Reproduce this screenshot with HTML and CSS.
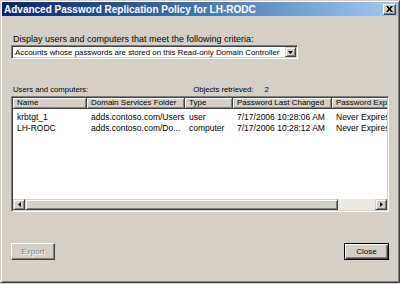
FILE: index.html
```html
<!DOCTYPE html>
<html>
<head>
<meta charset="utf-8">
<link rel="stylesheet" href="styles.css">
</head>
<body>
<div class="window">
  <div class="titlebar">
    <span class="title">Advanced Password Replication Policy for LH-RODC</span>
    <span class="xbtn"><svg width="7" height="6" viewBox="0 0 7 6"><path d="M0 0h2l1.5 2L5 0h2L4.5 3 7 6H5L3.5 4 2 6H0l2.5-3z" fill="#000"/></svg></span>
  </div>
  <div class="body">
    <div class="label criteria">Display users and computers that meet the following criteria:</div>
    <div class="select">
      <span class="select-text">Accounts whose passwords are stored on this Read-only Domain Controller</span>
      <span class="select-btn"><svg width="5" height="3" viewBox="0 0 5 3"><path d="M0 0h5L2.5 3z" fill="#000"/></svg></span>
    </div>
    <div class="listhead">
      <span class="label">Users and computers:</span>
      <span class="label count">Objects retrieved:<span class="num">2</span></span>
    </div>
    <div class="list">
      <div class="grid">
        <div class="hcell">Name</div>
        <div class="hcell">Domain Services Folder</div>
        <div class="hcell">Type</div>
        <div class="hcell">Password Last Changed</div>
        <div class="hcell">Password Expires</div>
        <div class="cell">krbtgt_1</div>
        <div class="cell">adds.contoso.com/Users</div>
        <div class="cell">user</div>
        <div class="cell">7/17/2006 10:28:06 AM</div>
        <div class="cell">Never Expires</div>
        <div class="cell">LH-RODC</div>
        <div class="cell">adds.contoso.com/Do...</div>
        <div class="cell">computer</div>
        <div class="cell">7/17/2006 10:28:12 AM</div>
        <div class="cell">Never Expires</div>
      </div>
      <div class="hscroll">
        <span class="sbtn"><svg width="3" height="5" viewBox="0 0 3 5"><path d="M3 0v5L0 2.5z" fill="#000"/></svg></span>
        <span class="thumb"></span>
        <span class="track"></span>
        <span class="sbtn"><svg width="3" height="5" viewBox="0 0 3 5"><path d="M0 0v5L3 2.5z" fill="#000"/></svg></span>
      </div>
    </div>
    <div class="buttons">
      <span class="btn disabled">Export</span>
      <span class="btn default">Close</span>
    </div>
  </div>
</div>
</body>
</html>
```
FILE: styles.css
```css
html, body {
  margin: 0;
  padding: 0;
  background: #d4d0c8;
}
body {
  width: 400px;
  height: 284px;
  overflow: hidden;
  font-family: "Liberation Sans", Arial, sans-serif;
  font-size: 8px;
  color: #000;
}
.window {
  box-sizing: border-box;
  width: 400px;
  height: 283px;
  border: 1px solid;
  border-color: #d4d0c8 #404040 #404040 #d4d0c8;
  box-shadow: inset 1px 1px 0 #fff, inset -1px -1px 0 #808080;
  padding: 1px;
  display: flex;
  flex-direction: column;
}
.titlebar {
  height: 14px;
  background: linear-gradient(to right, #0a246a 0%, #3a6ea5 45%, #a6caf0 100%);
  display: flex;
  align-items: center;
  justify-content: space-between;
  padding: 0 2px 0 2px;
}
.title {
  color: #fff;
  font-weight: bold;
  font-size: 10px;
  white-space: nowrap;
}
.xbtn {
  box-sizing: border-box;
  width: 13px;
  height: 11px;
  background: #d4d0c8;
  border: 1px solid;
  border-color: #fff #404040 #404040 #fff;
  box-shadow: inset -1px -1px 0 #808080;
  display: flex;
  align-items: center;
  justify-content: center;
}
.body {
  flex: 1;
  display: flex;
  flex-direction: column;
  padding: 0 9px 0 9px;
}
.label {
  line-height: 10px;
  white-space: nowrap;
}
.criteria {
  margin-top: 18px;
  padding-left: 2px;
  font-size: 9px;
}
.select {
  box-sizing: border-box;
  margin-top: 1px;
  width: 287px;
  height: 14px;
  background: #fff;
  border: 1px solid;
  border-color: #808080 #fff #fff #808080;
  box-shadow: inset 1px 1px 0 #404040, inset -1px -1px 0 #d4d0c8;
  display: flex;
  align-items: center;
  justify-content: space-between;
  padding: 0 1px 0 3px;
}
.select-text {
  white-space: nowrap;
  font-size: 7.9px;
}
.select-btn {
  box-sizing: border-box;
  width: 11px;
  height: 10px;
  background: #d4d0c8;
  border: 1px solid;
  border-color: #d4d0c8 #404040 #404040 #d4d0c8;
  box-shadow: inset 1px 1px 0 #fff, inset -1px -1px 0 #808080;
  display: flex;
  align-items: center;
  justify-content: center;
}
.listhead {
  margin-top: 26px;
  display: flex;
  padding-left: 2px;
  font-size: 7.7px;
}
.count {
  margin-left: 105px;
}
.num {
  margin-left: 11px;
}
.list {
  box-sizing: border-box;
  margin-top: 1px;
  width: 378px;
  height: 116px;
  background: #fff;
  border: 1px solid;
  border-color: #808080 #fff #fff #808080;
  box-shadow: inset 1px 1px 0 #404040, inset -1px -1px 0 #d4d0c8;
  padding: 1px;
  display: flex;
  flex-direction: column;
  overflow: hidden;
}
.grid {
  flex: 1;
  display: grid;
  grid-template-columns: 74px 98px 48px 99px 80px;
  grid-template-rows: 14px;
  grid-auto-rows: 11px;
  align-content: start;
  overflow: hidden;
}
.hcell {
  box-sizing: border-box;
  height: 11px;
  background: #d4d0c8;
  border-right: 1px solid #404040;
  border-bottom: 1px solid #404040;
  box-shadow: inset 1px 1px 0 #fff, inset -1px -1px 0 #808080;
  padding-left: 4px;
  line-height: 10px;
  white-space: nowrap;
  overflow: hidden;
}
.cell {
  padding-left: 4px;
  line-height: 11px;
  font-size: 8.5px;
  white-space: nowrap;
  overflow: hidden;
}
.hscroll {
  height: 11px;
  display: flex;
  background: #d4d0c8;
}
.sbtn {
  box-sizing: border-box;
  width: 12px;
  height: 11px;
  background: #d4d0c8;
  border: 1px solid;
  border-color: #d4d0c8 #404040 #404040 #d4d0c8;
  box-shadow: inset 1px 1px 0 #fff, inset -1px -1px 0 #808080;
  display: flex;
  align-items: center;
  justify-content: center;
}
.thumb {
  box-sizing: border-box;
  width: 313px;
  height: 11px;
  background: #d4d0c8;
  border: 1px solid;
  border-color: #d4d0c8 #404040 #404040 #d4d0c8;
  box-shadow: inset 1px 1px 0 #fff, inset -1px -1px 0 #808080;
}
.track {
  flex: 1;
  background: #ebe9e4;
}
.buttons {
  margin-top: 31px;
  display: flex;
  justify-content: space-between;
  width: 378px;
}
.btn {
  box-sizing: border-box;
  height: 17px;
  background: #d4d0c8;
  border: 1px solid;
  border-color: #fff #404040 #404040 #fff;
  box-shadow: inset -1px -1px 0 #808080;
  display: flex;
  align-items: center;
  justify-content: center;
}
.disabled {
  width: 44px;
  color: #808080;
  text-shadow: 1px 1px 0 #fff;
}
.default {
  width: 45px;
  border: 1px solid #000;
  box-shadow: inset 1px 1px 0 #fff, inset -1px -1px 0 #404040, inset -2px -2px 0 #808080;
}
```
